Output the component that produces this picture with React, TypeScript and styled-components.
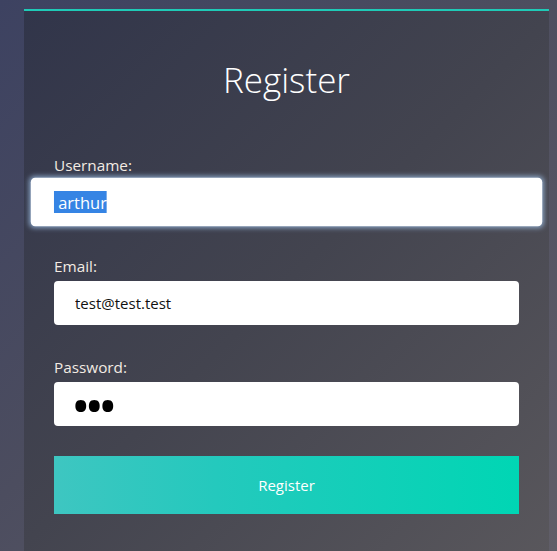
import React, { useEffect, useRef } from "react";
import styled, { createGlobalStyle } from "styled-components";

const GlobalStyle = createGlobalStyle`
  html, body {
    margin: 0;
    padding: 0;
    height: 100%;
  }
  body {
    background: linear-gradient(135deg, #3d4261 0%, #4c4d5f 45%, #605e68 100%);
    font-family: "Open Sans", "Noto Sans", sans-serif;
    overflow: hidden;
  }
`;

const Page = styled.div`
  min-height: 551px;
  padding: 9px 8px 0 24px;
  box-sizing: border-box;
`;

const Card = styled.div`
  width: 525px;
  min-height: 542px;
  box-sizing: border-box;
  border-top: 2px solid #1fcab7;
  background: linear-gradient(135deg, #31354a 0%, #43444f 50%, #59575c 100%);
  padding: 45px 30px 40px;
  display: flex;
  flex-direction: column;
`;

const Title = styled.h1`
  margin: 0 0 51px;
  text-align: center;
  font-family: "Open Sans", sans-serif;
  font-weight: 300;
  font-size: 35px;
  line-height: 48px;
  color: #ffffff;
`;

const Form = styled.form`
  display: flex;
  flex-direction: column;
  gap: 32px;
`;

const Field = styled.div`
  display: flex;
  flex-direction: column;
  gap: 5px;
`;

const Label = styled.label`
  font-family: "Open Sans", sans-serif;
  font-size: 15.3px;
  line-height: 20px;
  color: #f3ebe3;
`;

const Input = styled.input<{ $active?: boolean }>`
  display: block;
  width: 100%;
  height: 44px;
  box-sizing: border-box;
  border: none;
  outline: none;
  border-radius: 4px;
  background: #ffffff;
  padding: 0 20px 0 21px;
  font-family: "Open Sans", sans-serif;
  font-size: 15px;
  color: #111;
  transform: ${(p) => (p.$active ? "scale(1.1)" : "none")};
  box-shadow: ${(p) =>
    p.$active ? "0 0 5px 1px rgba(160, 195, 235, 0.75)" : "none"};
  &::selection {
    background: #3584e4;
    color: #ffffff;
  }
`;

const PasswordInput = styled(Input)`
  font-size: 52px;
  letter-spacing: -6px;
  padding-left: 17px;
  color: #000;
`;

const Submit = styled.button`
  margin-top: -2px;
  height: 58px;
  border: none;
  background: linear-gradient(90deg, #3ec6c1 0%, #24c9bd 35%, #00d6b4 100%);
  color: #ffffff;
  font-family: "Open Sans", sans-serif;
  font-size: 15px;
  cursor: pointer;
`;

export default function App() {
  const userRef = useRef<HTMLInputElement>(null);
  useEffect(() => {
    const el = userRef.current;
    if (el) {
      el.focus();
      el.select();
    }
  }, []);

  return (
    <>
      <GlobalStyle />
      <Page>
        <Card>
          <Title>Register</Title>
          <Form onSubmit={(e) => e.preventDefault()}>
            <Field>
              <Label htmlFor="username">Username:</Label>
              <Input
                id="username"
                ref={userRef}
                $active
                defaultValue=" arthur"
              />
            </Field>
            <Field>
              <Label htmlFor="email">Email:</Label>
              <Input id="email" defaultValue="test@test.test" />
            </Field>
            <Field>
              <Label htmlFor="password">Password:</Label>
              <PasswordInput id="password" type="password" defaultValue="abc" />
            </Field>
            <Submit type="submit">Register</Submit>
          </Form>
        </Card>
      </Page>
    </>
  );
}
